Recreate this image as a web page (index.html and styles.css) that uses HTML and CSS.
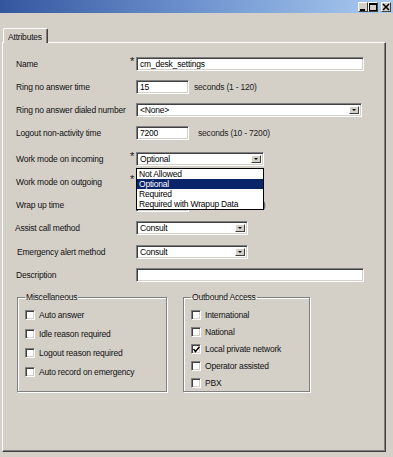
FILE: index.html
```html
<!DOCTYPE html>
<html lang="en">

<head>
    <meta charset="UTF-8">
    <meta name="viewport" content="width=device-width, initial-scale=1.0">
    <title>Desk Settings</title>
    <link rel="stylesheet" href="styles.css">
</head>

<body>
    <div class="titlebar">
        <div class="caps">
            <span class="cap"><svg width="8" height="8" viewBox="0 0 8 8"><rect x="1" y="6" width="5" height="2" fill="#000"/></svg></span>
            <span class="cap"><svg width="8" height="8" viewBox="0 0 8 8"><rect x="0.5" y="0.5" width="7" height="7" fill="none" stroke="#000"/><rect x="0" y="0" width="8" height="2" fill="#000"/></svg></span>
            <span class="cap close"><svg width="8" height="8" viewBox="0 0 8 8"><path d="M1 1 L7 7 M7 1 L1 7" stroke="#000" stroke-width="1.6"/></svg></span>
        </div>
    </div>

    <div class="tabs">
        <div class="tab">Attributes</div>
    </div>

    <div class="panel">
        <div class="form">
            <div class="row">
                <label>Name</label><span class="req">*</span>
                <div class="field wide">cm_desk_settings</div>
            </div>
            <div class="row">
                <label>Ring no answer time</label><span class="req"></span>
                <div class="inline"><div class="field short">15</div><span class="hint">seconds (1 - 120)</span></div>
            </div>
            <div class="row">
                <label>Ring no answer dialed number</label><span class="req"></span>
                <div class="field select full">&lt;None&gt;<span class="drop"></span></div>
            </div>
            <div class="row">
                <label>Logout non-activity time</label><span class="req"></span>
                <div class="inline"><div class="field short">7200</div><span class="hint far">seconds (10 - 7200)</span></div>
            </div>
            <div class="row spaced">
                <label>Work mode on incoming</label><span class="req">*</span>
                <div class="combo">
                    <div class="field select mid">Optional<span class="drop"></span></div>
                    <ul class="list">
                        <li>Not Allowed</li>
                        <li class="selected">Optional</li>
                        <li>Required</li>
                        <li>Required with Wrapup Data</li>
                    </ul>
                </div>
            </div>
            <div class="row">
                <label>Work mode on outgoing</label><span class="req">*</span>
                <div class="field select mid"><span class="drop"></span></div>
            </div>
            <div class="row">
                <label>Wrap up time</label><span class="req"></span>
                <div class="inline"><div class="field short"></div><span class="hint far">seconds (0 - 7200)</span></div>
            </div>
            <div class="row">
                <label class="outdent">Assist call method</label><span class="req"></span>
                <div class="field select narrow">Consult<span class="drop"></span></div>
            </div>
            <div class="row spaced-sm">
                <label class="indent">Emergency alert method</label><span class="req"></span>
                <div class="field select narrow">Consult<span class="drop"></span></div>
            </div>
            <div class="row">
                <label>Description</label><span class="req"></span>
                <div class="field wide"></div>
            </div>
        </div>

        <div class="groups">
            <fieldset class="misc">
                <legend>Miscellaneous</legend>
                <div class="check"><span class="box"></span>Auto answer</div>
                <div class="check"><span class="box"></span>Idle reason required</div>
                <div class="check"><span class="box"></span>Logout reason required</div>
                <div class="check"><span class="box"></span>Auto record on emergency</div>
            </fieldset>
            <fieldset class="outbound">
                <legend>Outbound Access</legend>
                <div class="check"><span class="box"></span>International</div>
                <div class="check"><span class="box"></span>National</div>
                <div class="check"><span class="box"><svg width="7" height="7" viewBox="0 0 7 7"><path d="M0.5 3 L2.5 5.5 L6.5 0.8" fill="none" stroke="#000" stroke-width="1.5"/></svg></span>Local private network</div>
                <div class="check"><span class="box"></span>Operator assisted</div>
                <div class="check"><span class="box"></span>PBX</div>
            </fieldset>
        </div>
    </div>
</body>

</html>
```

FILE: styles.css
```css
* {
    box-sizing: border-box;
}

body {
    margin: 0;
    width: 393px;
    height: 457px;
    background-color: #d4d0c8;
    font-family: "Liberation Sans", Arial, sans-serif;
    font-size: 8.5px;
    letter-spacing: -0.2px;
    color: #111;
    overflow: hidden;
}

.titlebar {
    height: 13px;
    background: linear-gradient(to right, #34569f, #6f93cf 50%, #aacbf0);
    display: flex;
    justify-content: flex-end;
    align-items: center;
    padding-right: 2px;
}

.caps {
    display: flex;
}

.cap {
    width: 10px;
    height: 10px;
    background: #d4d0c8;
    border: 1px solid;
    border-color: #fff #404040 #404040 #fff;
    display: flex;
    align-items: center;
    justify-content: center;
}

.cap.close {
    margin-left: 3px;
}

.tabs {
    margin-top: 15px;
    margin-bottom: -1px;
    padding-left: 3px;
    display: flex;
}

.tab {
    position: relative;
    z-index: 1;
    width: 45px;
    height: 15px;
    padding: 3px 0 0 4px;
    background: #d4d0c8;
    border-top: 1px solid #fff;
    border-left: 1px solid #fff;
    border-right: 1px solid #404040;
    box-shadow: inset -1px 0 0 #808080;
    border-radius: 2px 2px 0 0;
    line-height: 10px;
}

.panel {
    margin-left: 2px;
    width: 384px;
    height: 410px;
    border-top: 1px solid #fff;
    border-left: 1px solid #fff;
    border-right: 1px solid #404040;
    border-bottom: 1px solid #404040;
    box-shadow: inset -1px -1px 0 #808080;
    padding: 14px 0 0 13px;
}

.form {
    display: flex;
    flex-direction: column;
    gap: 9px;
}

.row {
    display: grid;
    grid-template-columns: 113px 7px auto;
    align-items: center;
    height: 14px;
}

.row.spaced {
    margin-top: 3px;
}

.row.spaced-sm {
    margin-top: 1px;
}

.row label {
    white-space: nowrap;
}

.row label.indent {
    padding-left: 1px;
}

.row label.outdent {
    margin-left: -1px;
}

.req {
    font-size: 11px;
    line-height: 8px;
    align-self: start;
    margin-left: 1px;
}

.field {
    position: relative;
    height: 14px;
    background: #fff;
    border: 1px solid;
    border-color: #808080 #fff #fff #808080;
    box-shadow: inset 1px 1px 0 #404040, inset -1px -1px 0 #d4d0c8;
    padding: 1px 3px;
    line-height: 11px;
    white-space: nowrap;
    color: #000;
}

.wide {
    width: 228px;
}

.full {
    width: 226px;
}

.short {
    width: 53px;
}

.mid {
    width: 128px;
}

.narrow {
    width: 112px;
}

.drop {
    position: absolute;
    right: 2px;
    top: 2px;
    width: 10px;
    height: 8px;
    background: #d4d0c8;
    border: 1px solid;
    border-color: #fff #404040 #404040 #fff;
}

.drop::after {
    content: "";
    position: absolute;
    left: 2px;
    top: 2px;
    border-left: 2px solid transparent;
    border-right: 2px solid transparent;
    border-top: 2px solid #000;
}

.inline {
    display: flex;
    align-items: center;
}

.hint {
    margin-left: 5px;
    color: #222;
}

.hint.far {
    margin-left: 9px;
}

.combo {
    position: relative;
}

.list {
    position: absolute;
    z-index: 2;
    left: 0;
    top: 16px;
    width: 128px;
    margin: 0;
    padding: 0;
    list-style: none;
    background: #fff;
    border: 1px solid #000;
    color: #000;
}

.list li {
    height: 10px;
    line-height: 10px;
    padding-left: 2px;
}

.list li.selected {
    background: #0a246a;
    color: #fff;
}

.groups {
    display: flex;
    gap: 16px;
    margin-top: 9px;
    padding-left: 1px;
}

fieldset {
    margin: 0;
    height: 101px;
    border: 1px solid #808080;
    box-shadow: 1px 1px 0 #fff, inset 1px 1px 0 #fff;
    padding: 7px 6px 0 7px;
    display: flex;
    flex-direction: column;
}

legend {
    padding: 0 1px;
    line-height: 12px;
}

.misc {
    width: 150px;
    gap: 9px;
}

.outbound {
    width: 127px;
    gap: 7px;
}

.check {
    display: flex;
    align-items: center;
    height: 10px;
    white-space: nowrap;
}

.box {
    width: 10px;
    height: 10px;
    margin-right: 4px;
    background: #fff;
    border: 1px solid;
    border-color: #808080 #fff #fff #808080;
    box-shadow: inset 1px 1px 0 #404040, inset -1px -1px 0 #d4d0c8;
    display: flex;
    align-items: center;
    justify-content: center;
}
```
